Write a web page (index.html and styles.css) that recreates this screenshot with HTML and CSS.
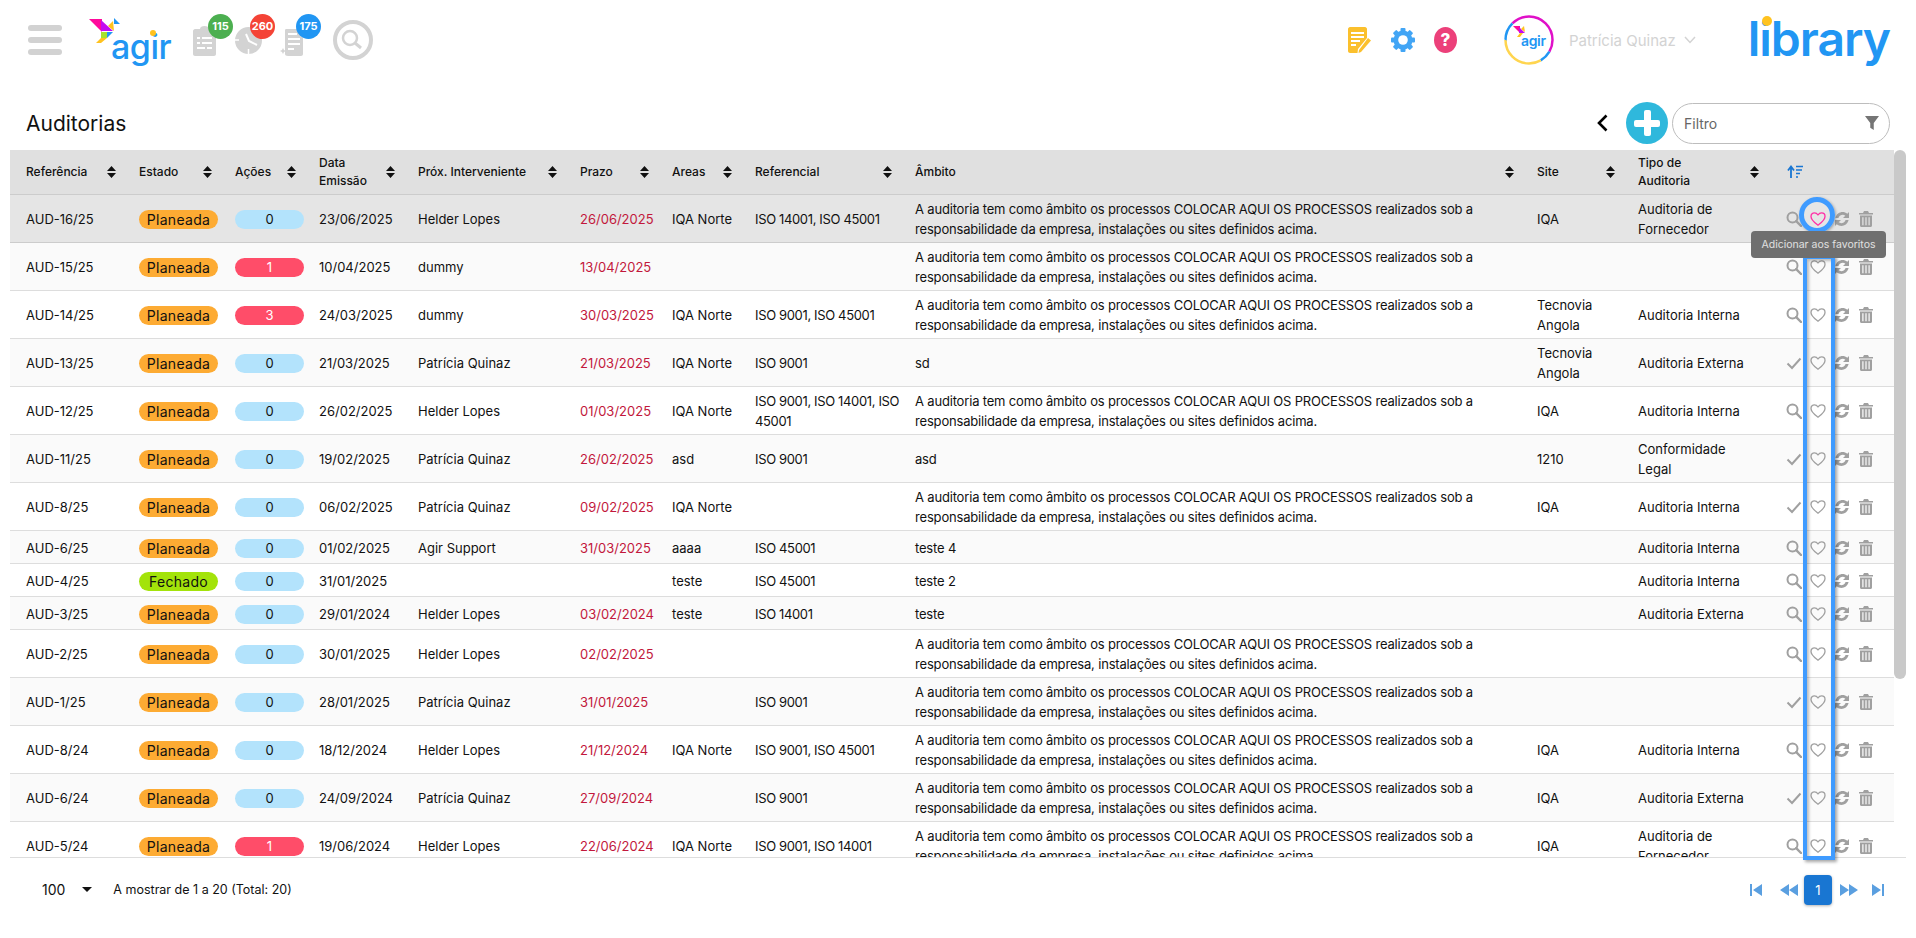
FILE: index.html
```html
<!DOCTYPE html>
<html lang="pt">
<head>
<meta charset="utf-8">
<title>Auditorias</title>
<link rel="stylesheet" href="styles.css">
</head>
<body>
<svg class="defs" width="0" height="0" aria-hidden="true">
  <symbol id="i-search" viewBox="0 0 16 16"><circle cx="6.5" cy="6.5" r="5" fill="none" stroke="currentColor" stroke-width="2"/><path d="M10.2 10.2 15 15" stroke="currentColor" stroke-width="2.4" stroke-linecap="round"/></symbol>
  <symbol id="i-check" viewBox="0 0 16 16"><path d="M1.5 8.5 6 13 14.5 3.5" fill="none" stroke="currentColor" stroke-width="2"/></symbol>
  <symbol id="i-heart" viewBox="0 0 16 16"><path d="M8 14.2C5 11.8 1 9 1 5.4 1 3.2 2.6 1.9 4.4 1.9 5.9 1.9 7.2 2.7 8 4 8.8 2.7 10.1 1.9 11.6 1.9 13.4 1.9 15 3.2 15 5.4 15 9 11 11.8 8 14.2Z" fill="none" stroke="currentColor" stroke-width="1.3" stroke-linejoin="round"/></symbol>
  <symbol id="i-refresh" viewBox="0 0 16 16"><path d="M15 1V7H9L11.3 4.700C9.300 3.200 5.800 3.600 4.400 7H1.400C2.800 1.300 9 -.6 13.300 2.700Z" fill="currentColor"/><path d="M1 15V9H7L4.700 11.300C6.700 12.800 10.200 12.400 11.600 9H14.600C13.200 14.700 7 16.600 2.700 13.300Z" fill="currentColor"/></symbol>
  <symbol id="i-trash" viewBox="0 0 14 16"><path d="M5 0H9L10 2H14V3.500H0V2H4Z" fill="currentColor"/><path d="M1 4.500H13V14.500C13 15.400 12.400 16 11.500 16H2.500C1.600 16 1 15.400 1 14.500ZM3.300 6.300V14.300H4.500V6.300ZM6.400 6.300V14.300H7.600V6.300ZM9.500 6.300V14.300H10.700V6.300Z" fill="currentColor" fill-rule="evenodd"/></symbol>
  <symbol id="i-sort" viewBox="0 0 9 12"><path d="M4.500 0 9 5H0ZM4.500 12 0 7H9Z" fill="currentColor"/></symbol>
</svg>

<header class="topbar">
  <div class="burger"><span></span><span></span><span></span></div>
  <div class="logo">
    <svg class="bird" viewBox="0 0 32 26" width="32" height="26">
      <polygon points="0,1 13,1 13,14" fill="#ff0a9c"/>
      <polygon points="12,2 24,13 12,13" fill="#c40df0"/>
      <polygon points="24,3 25,13 19,8" fill="#ffc21f"/>
      <polygon points="25,0 31,6 25,6" fill="#2196f3"/>
      <polygon points="12,14 18,14 18,20 12,20" fill="#a6e22e"/>
      <polygon points="18,14 24,14 18,20" fill="#2196f3"/>
      <polygon points="7,25 12,20 18,20 12,25" fill="#ffc21f"/>
    </svg>
    <span class="logo-text">agir</span>
    <span class="logo-dot"></span>
  </div>
  <div class="quick">
    <div class="quick-item q1">
      <svg viewBox="0 0 23 30" width="23" height="30"><path d="M2 3H7C7 1 9 0 11.500 0S16 1 16 3H21C22 3 23 4 23 5V28C23 29 22 30 21 30H2C1 30 0 29 0 28V5C0 4 1 3 2 3ZM4 11V13H7V11ZM9 11V13H19V11ZM4 16V18H7V16ZM9 16V18H19V16ZM4 21V23H12V21ZM14 21V23H19V21Z" fill="#d3d3d3" fill-rule="evenodd"/></svg>
      <span class="count green">115</span>
    </div>
    <div class="quick-item q2">
      <svg viewBox="0 0 27 27" width="27" height="27"><circle cx="13.500" cy="13.500" r="13.500" fill="#d3d3d3"/><path d="M11 7 14 14 22 18" fill="none" stroke="#fff" stroke-width="2"/><path d="M13.500 22V27M0 13H4" stroke="#fff" stroke-width="1.500"/></svg>
      <span class="count red">260</span>
    </div>
    <div class="quick-item q3">
      <svg viewBox="0 0 23 27" width="23" height="27"><path d="M6 0H20C22 0 23 1 23 3V25C23 26 22 27 21 27H8C6 27 5 26 5 25V2C5 1 5 0 6 0ZM8 4V6H17V4ZM8 9V11H20V9ZM8 14V16H20V14ZM8 19V21H14V19Z" fill="#d3d3d3" fill-rule="evenodd"/><path d="M3 19 4 21 6 22 4 23 3 25 2 23 0 22 2 21Z" fill="#d3d3d3"/></svg>
      <span class="count blue">175</span>
    </div>
  </div>
  <div class="search-ring">
    <svg viewBox="0 0 40 40" width="40" height="40"><circle cx="20" cy="20" r="18" fill="none" stroke="#d3d3d3" stroke-width="4"/><circle cx="17" cy="18" r="7" fill="none" stroke="#d3d3d3" stroke-width="2.500"/><path d="M22 23 28 28" stroke="#d3d3d3" stroke-width="3"/></svg>
  </div>
  <div class="spacer"></div>
  <svg class="tool t-note" viewBox="0 0 23 26" width="23" height="26"><path d="M2 0H17C18 0 19 1 19 2V11L10 22 9.500 26H2C1 26 0 25 0 24V2C0 1 1 0 2 0ZM3 5V7H16V5ZM3 9V11H16V9ZM3 13V15H12V13ZM3 17V19H8V17Z" fill="#fbc02d" fill-rule="evenodd"/><path d="M20 11 23 13.500 13 25 10.500 26 11 23Z" fill="#fbc02d"/></svg>
  <svg class="tool t-gear" viewBox="0 0 24 24" width="24" height="24">
    <circle cx="12" cy="12" r="9.500" fill="#42a5f5"/>
    <g fill="#42a5f5"><rect x="9.500" y="0" width="5" height="24" rx="1"/><rect x="0" y="9.500" width="24" height="5" rx="1"/><rect x="9.500" y="0" width="5" height="24" rx="1" transform="rotate(45 12 12)"/><rect x="9.500" y="0" width="5" height="24" rx="1" transform="rotate(-45 12 12)"/></g>
    <circle cx="12" cy="12" r="4.800" fill="#fff"/>
  </svg>
  <span class="tool t-help">?</span>
  <div class="avatar">
    <svg viewBox="0 0 50 50" width="50" height="50">
      <g fill="none" stroke-width="2.500" transform="rotate(-90 25 25)">
        <circle cx="25" cy="25" r="23.500" pathLength="360" stroke="#e010c8" stroke-dasharray="165 360" stroke-dashoffset="-315"/>
        <circle cx="25" cy="25" r="23.500" pathLength="360" stroke="#e010c8" stroke-dasharray="120 360"/>
        <circle cx="25" cy="25" r="23.500" pathLength="360" stroke="#2196f3" stroke-dasharray="30 360" stroke-dashoffset="-120"/>
        <circle cx="25" cy="25" r="23.500" pathLength="360" stroke="#ffd54f" stroke-dasharray="120 360" stroke-dashoffset="-150"/>
        <circle cx="25" cy="25" r="23.500" pathLength="360" stroke="#2196f3" stroke-dasharray="45 360" stroke-dashoffset="-270"/>
      </g>
      <polygon points="9,11 16,11 16,18" fill="#ff0a9c"/>
      <polygon points="15,12 21,18 15,18" fill="#c40df0"/>
      <polygon points="20,11 21,17 17,14" fill="#ffc21f"/>
      <polygon points="13,22 16,18 19,18 16,22" fill="#ffc21f"/>
    </svg>
    <span class="avatar-text">agir</span>
  </div>
  <span class="user">Patrícia Quinaz</span>
  <svg class="chev" viewBox="0 0 12 8" width="12" height="8"><path d="M1 1 6 6.500 11 1" fill="none" stroke="#d3d3d3" stroke-width="1.500"/></svg>
  <div class="brand">library<span class="brand-dot"></span></div>
</header>

<section class="titlebar">
  <h1>Auditorias</h1>
  <div class="actions">
    <svg class="back" viewBox="0 0 11 18" width="11" height="18"><path d="M9.500 1.500 2 9 9.500 16.500" fill="none" stroke="#000" stroke-width="2.600"/></svg>
    <button class="add" type="button" aria-label="Adicionar"><span class="plus-h"></span><span class="plus-v"></span></button>
    <div class="filter">
      <span>Filtro</span>
      <svg viewBox="0 0 12 12" width="14" height="14"><path d="M0 0H12L7.500 6V12L4.500 10V6Z" fill="#757575"/></svg>
    </div>
  </div>
</section>

<section class="table-area">
  <div class="table-clip">
    <table>
      <colgroup>
        <col class="c-ref"><col class="c-est"><col class="c-aco"><col class="c-dat"><col class="c-pro"><col class="c-pra"><col class="c-are"><col class="c-rfl"><col class="c-amb"><col class="c-sit"><col class="c-tip"><col class="c-act">
      </colgroup>
      <thead>
        <tr>
          <th><div class="th"><span>Referência</span><svg class="sort"><use href="#i-sort"/></svg></div></th>
          <th><div class="th"><span>Estado</span><svg class="sort"><use href="#i-sort"/></svg></div></th>
          <th><div class="th"><span>Ações</span><svg class="sort"><use href="#i-sort"/></svg></div></th>
          <th><div class="th"><span>Data<br>Emissão</span><svg class="sort"><use href="#i-sort"/></svg></div></th>
          <th><div class="th"><span>Próx. Interveniente</span><svg class="sort"><use href="#i-sort"/></svg></div></th>
          <th><div class="th"><span>Prazo</span><svg class="sort"><use href="#i-sort"/></svg></div></th>
          <th><div class="th"><span>Areas</span><svg class="sort"><use href="#i-sort"/></svg></div></th>
          <th><div class="th"><span>Referencial</span><svg class="sort"><use href="#i-sort"/></svg></div></th>
          <th><div class="th"><span>Âmbito</span><svg class="sort"><use href="#i-sort"/></svg></div></th>
          <th><div class="th"><span>Site</span><svg class="sort"><use href="#i-sort"/></svg></div></th>
          <th><div class="th"><span>Tipo de<br>Auditoria</span><svg class="sort"><use href="#i-sort"/></svg></div></th>
          <th class="th-act"><svg class="sort-list" viewBox="0 0 16 14" width="16" height="14"><path d="M4 13V3M1 5.500 4 1.500 7 5.500" fill="none" stroke="#1976d2" stroke-width="1.800"/><path d="M9 1.500H16M9 5H15M9 8.500H13M9 12H11" stroke="#1976d2" stroke-width="1.600"/></svg></th>
        </tr>
      </thead>
      <tbody>
        <tr class="hover"><td>AUD-16/25</td><td><span class="pill plan">Planeada</span></td><td><span class="num zero">0</span></td><td>23/06/2025</td><td>Helder Lopes</td><td class="due">26/06/2025</td><td>IQA Norte</td><td>ISO 14001, ISO 45001</td><td>A auditoria tem como âmbito os processos COLOCAR AQUI OS PROCESSOS realizados sob a responsabilidade da empresa, instalações ou sites definidos acima.</td><td>IQA</td><td>Auditoria de Fornecedor</td><td><div class="ops"><svg class="op"><use href="#i-search"/></svg><svg class="op heart-on"><use href="#i-heart"/></svg><svg class="op"><use href="#i-refresh"/></svg><svg class="op"><use href="#i-trash"/></svg></div></td></tr>
        <tr><td>AUD-15/25</td><td><span class="pill plan">Planeada</span></td><td><span class="num hot">1</span></td><td>10/04/2025</td><td>dummy</td><td class="due">13/04/2025</td><td></td><td></td><td>A auditoria tem como âmbito os processos COLOCAR AQUI OS PROCESSOS realizados sob a responsabilidade da empresa, instalações ou sites definidos acima.</td><td></td><td></td><td><div class="ops"><svg class="op"><use href="#i-search"/></svg><svg class="op"><use href="#i-heart"/></svg><svg class="op"><use href="#i-refresh"/></svg><svg class="op"><use href="#i-trash"/></svg></div></td></tr>
        <tr><td>AUD-14/25</td><td><span class="pill plan">Planeada</span></td><td><span class="num hot">3</span></td><td>24/03/2025</td><td>dummy</td><td class="due">30/03/2025</td><td>IQA Norte</td><td>ISO 9001, ISO 45001</td><td>A auditoria tem como âmbito os processos COLOCAR AQUI OS PROCESSOS realizados sob a responsabilidade da empresa, instalações ou sites definidos acima.</td><td>Tecnovia Angola</td><td>Auditoria Interna</td><td><div class="ops"><svg class="op"><use href="#i-search"/></svg><svg class="op"><use href="#i-heart"/></svg><svg class="op"><use href="#i-refresh"/></svg><svg class="op"><use href="#i-trash"/></svg></div></td></tr>
        <tr><td>AUD-13/25</td><td><span class="pill plan">Planeada</span></td><td><span class="num zero">0</span></td><td>21/03/2025</td><td>Patrícia Quinaz</td><td class="due">21/03/2025</td><td>IQA Norte</td><td>ISO 9001</td><td>sd</td><td>Tecnovia Angola</td><td>Auditoria Externa</td><td><div class="ops"><svg class="op"><use href="#i-check"/></svg><svg class="op"><use href="#i-heart"/></svg><svg class="op"><use href="#i-refresh"/></svg><svg class="op"><use href="#i-trash"/></svg></div></td></tr>
        <tr><td>AUD-12/25</td><td><span class="pill plan">Planeada</span></td><td><span class="num zero">0</span></td><td>26/02/2025</td><td>Helder Lopes</td><td class="due">01/03/2025</td><td>IQA Norte</td><td>ISO 9001, ISO 14001, ISO<br>45001</td><td>A auditoria tem como âmbito os processos COLOCAR AQUI OS PROCESSOS realizados sob a responsabilidade da empresa, instalações ou sites definidos acima.</td><td>IQA</td><td>Auditoria Interna</td><td><div class="ops"><svg class="op"><use href="#i-search"/></svg><svg class="op"><use href="#i-heart"/></svg><svg class="op"><use href="#i-refresh"/></svg><svg class="op"><use href="#i-trash"/></svg></div></td></tr>
        <tr><td>AUD-11/25</td><td><span class="pill plan">Planeada</span></td><td><span class="num zero">0</span></td><td>19/02/2025</td><td>Patrícia Quinaz</td><td class="due">26/02/2025</td><td>asd</td><td>ISO 9001</td><td>asd</td><td>1210</td><td>Conformidade Legal</td><td><div class="ops"><svg class="op"><use href="#i-check"/></svg><svg class="op"><use href="#i-heart"/></svg><svg class="op"><use href="#i-refresh"/></svg><svg class="op"><use href="#i-trash"/></svg></div></td></tr>
        <tr><td>AUD-8/25</td><td><span class="pill plan">Planeada</span></td><td><span class="num zero">0</span></td><td>06/02/2025</td><td>Patrícia Quinaz</td><td class="due">09/02/2025</td><td>IQA Norte</td><td></td><td>A auditoria tem como âmbito os processos COLOCAR AQUI OS PROCESSOS realizados sob a responsabilidade da empresa, instalações ou sites definidos acima.</td><td>IQA</td><td>Auditoria Interna</td><td><div class="ops"><svg class="op"><use href="#i-check"/></svg><svg class="op"><use href="#i-heart"/></svg><svg class="op"><use href="#i-refresh"/></svg><svg class="op"><use href="#i-trash"/></svg></div></td></tr>
        <tr><td>AUD-6/25</td><td><span class="pill plan">Planeada</span></td><td><span class="num zero">0</span></td><td>01/02/2025</td><td>Agir Support</td><td class="due">31/03/2025</td><td>aaaa</td><td>ISO 45001</td><td>teste 4</td><td></td><td>Auditoria Interna</td><td><div class="ops"><svg class="op"><use href="#i-search"/></svg><svg class="op"><use href="#i-heart"/></svg><svg class="op"><use href="#i-refresh"/></svg><svg class="op"><use href="#i-trash"/></svg></div></td></tr>
        <tr><td>AUD-4/25</td><td><span class="pill done">Fechado</span></td><td><span class="num zero">0</span></td><td>31/01/2025</td><td></td><td class="due"></td><td>teste</td><td>ISO 45001</td><td>teste 2</td><td></td><td>Auditoria Interna</td><td><div class="ops"><svg class="op"><use href="#i-search"/></svg><svg class="op"><use href="#i-heart"/></svg><svg class="op"><use href="#i-refresh"/></svg><svg class="op"><use href="#i-trash"/></svg></div></td></tr>
        <tr><td>AUD-3/25</td><td><span class="pill plan">Planeada</span></td><td><span class="num zero">0</span></td><td>29/01/2024</td><td>Helder Lopes</td><td class="due">03/02/2024</td><td>teste</td><td>ISO 14001</td><td>teste</td><td></td><td>Auditoria Externa</td><td><div class="ops"><svg class="op"><use href="#i-search"/></svg><svg class="op"><use href="#i-heart"/></svg><svg class="op"><use href="#i-refresh"/></svg><svg class="op"><use href="#i-trash"/></svg></div></td></tr>
        <tr><td>AUD-2/25</td><td><span class="pill plan">Planeada</span></td><td><span class="num zero">0</span></td><td>30/01/2025</td><td>Helder Lopes</td><td class="due">02/02/2025</td><td></td><td></td><td>A auditoria tem como âmbito os processos COLOCAR AQUI OS PROCESSOS realizados sob a responsabilidade da empresa, instalações ou sites definidos acima.</td><td></td><td></td><td><div class="ops"><svg class="op"><use href="#i-search"/></svg><svg class="op"><use href="#i-heart"/></svg><svg class="op"><use href="#i-refresh"/></svg><svg class="op"><use href="#i-trash"/></svg></div></td></tr>
        <tr><td>AUD-1/25</td><td><span class="pill plan">Planeada</span></td><td><span class="num zero">0</span></td><td>28/01/2025</td><td>Patrícia Quinaz</td><td class="due">31/01/2025</td><td></td><td>ISO 9001</td><td>A auditoria tem como âmbito os processos COLOCAR AQUI OS PROCESSOS realizados sob a responsabilidade da empresa, instalações ou sites definidos acima.</td><td></td><td></td><td><div class="ops"><svg class="op"><use href="#i-check"/></svg><svg class="op"><use href="#i-heart"/></svg><svg class="op"><use href="#i-refresh"/></svg><svg class="op"><use href="#i-trash"/></svg></div></td></tr>
        <tr><td>AUD-8/24</td><td><span class="pill plan">Planeada</span></td><td><span class="num zero">0</span></td><td>18/12/2024</td><td>Helder Lopes</td><td class="due">21/12/2024</td><td>IQA Norte</td><td>ISO 9001, ISO 45001</td><td>A auditoria tem como âmbito os processos COLOCAR AQUI OS PROCESSOS realizados sob a responsabilidade da empresa, instalações ou sites definidos acima.</td><td>IQA</td><td>Auditoria Interna</td><td><div class="ops"><svg class="op"><use href="#i-search"/></svg><svg class="op"><use href="#i-heart"/></svg><svg class="op"><use href="#i-refresh"/></svg><svg class="op"><use href="#i-trash"/></svg></div></td></tr>
        <tr><td>AUD-6/24</td><td><span class="pill plan">Planeada</span></td><td><span class="num zero">0</span></td><td>24/09/2024</td><td>Patrícia Quinaz</td><td class="due">27/09/2024</td><td></td><td>ISO 9001</td><td>A auditoria tem como âmbito os processos COLOCAR AQUI OS PROCESSOS realizados sob a responsabilidade da empresa, instalações ou sites definidos acima.</td><td>IQA</td><td>Auditoria Externa</td><td><div class="ops"><svg class="op"><use href="#i-check"/></svg><svg class="op"><use href="#i-heart"/></svg><svg class="op"><use href="#i-refresh"/></svg><svg class="op"><use href="#i-trash"/></svg></div></td></tr>
        <tr><td>AUD-5/24</td><td><span class="pill plan">Planeada</span></td><td><span class="num hot">1</span></td><td>19/06/2024</td><td>Helder Lopes</td><td class="due">22/06/2024</td><td>IQA Norte</td><td>ISO 9001, ISO 14001</td><td>A auditoria tem como âmbito os processos COLOCAR AQUI OS PROCESSOS realizados sob a responsabilidade da empresa, instalações ou sites definidos acima.</td><td>IQA</td><td>Auditoria de Fornecedor</td><td><div class="ops"><svg class="op"><use href="#i-search"/></svg><svg class="op"><use href="#i-heart"/></svg><svg class="op"><use href="#i-refresh"/></svg><svg class="op"><use href="#i-trash"/></svg></div></td></tr>
      </tbody>
    </table>
  </div>
  <div class="scrollbar"></div>
</section>

<footer class="pagebar">
  <span class="size">100</span>
  <span class="size-caret"></span>
  <span class="info">A mostrar de 1 a 20 (Total: 20)</span>
  <div class="spacer"></div>
  <svg class="pg pg-first" viewBox="0 0 12 12" width="12" height="12"><path d="M0 0H2V12H0ZM12 0V12L3 6Z" fill="#5a9fe0"/></svg>
  <svg class="pg pg-prev" viewBox="0 0 18 12" width="18" height="12"><path d="M9 0V12L0 6ZM18 0V12L9 6Z" fill="#5a9fe0"/></svg>
  <span class="pg-current">1</span>
  <svg class="pg pg-next" viewBox="0 0 18 12" width="18" height="12"><path d="M0 0V12L9 6ZM9 0V12L18 6Z" fill="#5a9fe0"/></svg>
  <svg class="pg pg-last" viewBox="0 0 12 12" width="12" height="12"><path d="M0 0V12L9 6ZM10 0H12V12H10Z" fill="#5a9fe0"/></svg>
</footer>

<div class="mark-circle"></div>
<div class="mark-rect"></div>
<div class="tip">Adicionar aos favoritos</div>
</body>
</html>
```

FILE: styles.css
```css
* { box-sizing: border-box; }
html, body { margin: 0; height: 100%; }
body {
  position: relative;
  width: 1916px;
  height: 938px;
  overflow: hidden;
  background: #fff;
  color: #111;
  font-family: Inter, "Liberation Sans", sans-serif;
  font-size: 13px;
}
.defs { position: absolute; }
.spacer { flex: 1; }

/* top bar */
.topbar { display: flex; align-items: center; height: 80px; padding: 0 26px 0 28px; }
.burger { display: flex; flex-direction: column; gap: 6px; width: 34px; }
.burger span { height: 6px; border-radius: 3px; background: #d2d2d2; }
.logo { position: relative; width: 82px; height: 44px; margin-left: 27px; }
.bird { position: absolute; left: 0; top: 0; }
.logo-text { position: absolute; left: 22px; top: 12px; font-size: 34px; line-height: 34px; font-weight: 500; color: #2196f3; letter-spacing: -.5px; }
.logo-dot { position: absolute; left: 61px; top: 12px; width: 6px; height: 6px; border-radius: 50%; background: #ffc21f; }
.quick { display: flex; flex: none; width: 140px; height: 42px; margin: 0 0 10px 22px; }
.quick-item { position: relative; }
.quick-item svg { position: absolute; left: 0; bottom: 0; }
.q1 { width: 42px; }
.q2 { width: 45px; }
.q3 { width: 45px; }
.q2 svg { bottom: 2px; }
.count {
  position: absolute;
  top: 0;
  width: 25px;
  height: 25px;
  border-radius: 50%;
  color: #fff;
  font-size: 11px;
  font-weight: 700;
  line-height: 25px;
  text-align: center;
}
.green { left: 15px; background: #4caf50; }
.red { left: 15px; background: #f44336; }
.blue { left: 16px; background: #2196f3; }
.search-ring { display: flex; }
.tool { flex: none; }
.t-note { margin-right: 20px; }
.t-gear { margin-right: 19px; }
.t-help {
  width: 23px;
  height: 26px;
  border-radius: 50%;
  background: #ec407a;
  color: #fff;
  font-size: 17px;
  font-weight: 800;
  line-height: 26px;
  text-align: center;
}
.avatar { position: relative; width: 50px; height: 50px; margin-left: 47px; flex: none; }
.avatar svg { display: block; }
.avatar-text { position: absolute; left: 17px; top: 18px; font-size: 14px; line-height: 16px; font-weight: 600; color: #2196f3; letter-spacing: -.3px; }
.user { margin-left: 15px; color: #d3d3d3; font-size: 15px; }
.chev { margin-left: 8px; flex: none; }
.brand {
  position: relative;
  flex: none;
  margin: -2px 0 0 52px;
  font-size: 48px;
  line-height: 50px;
  font-weight: 600;
  color: #2196f3;
  letter-spacing: -1px;
}
.brand-dot { position: absolute; left: 14px; top: 2px; width: 10px; height: 10px; border-radius: 50%; background: #ffc21f; }

/* title row */
.titlebar { display: flex; align-items: center; justify-content: space-between; height: 70px; padding: 16px 26px 0 26px; }
h1 { margin: 0; font-size: 21px; font-weight: 400; color: #111; }
.actions { display: flex; align-items: center; }
.back { margin-right: 18px; }
.add { position: relative; width: 42px; height: 42px; margin-right: 4px; padding: 0; border: 0; border-radius: 50%; background: #2fb8dc; }
.plus-h, .plus-v { position: absolute; background: #fff; border-radius: 2px; }
.plus-h { left: 8px; top: 17.5px; width: 26px; height: 7px; }
.plus-v { left: 17.5px; top: 8px; width: 7px; height: 26px; }
.filter {
  display: flex;
  align-items: center;
  justify-content: space-between;
  width: 218px;
  height: 41px;
  padding: 0 10px 0 11px;
  border: 1px solid #bdbdbd;
  border-radius: 21px;
  color: #666;
  font-size: 14px;
}

/* table */
.table-area { display: flex; align-items: flex-start; height: 707px; padding-left: 10px; }
.table-clip { width: 1884px; height: 707px; overflow: hidden; }
table { width: 1884px; table-layout: fixed; border-collapse: separate; border-spacing: 0; }
.c-ref { width: 113px; } .c-est { width: 96px; } .c-aco { width: 84px; } .c-dat { width: 99px; }
.c-pro { width: 162px; } .c-pra { width: 92px; } .c-are { width: 83px; } .c-rfl { width: 160px; }
.c-amb { width: 622px; } .c-sit { width: 101px; } .c-tip { width: 144px; } .c-act { width: 128px; }
th {
  height: 45px;
  padding: 0 7px 0 16px;
  background: #e0e0e0;
  border-bottom: 1px solid #ccc;
  font-size: 12px;
  font-weight: 500;
  line-height: 18px;
  text-align: left;
}
.th { display: flex; align-items: center; justify-content: space-between; }
.sort { flex: none; width: 9px; height: 12px; color: #111; }
.th-act { padding-left: 21px; }
.sort-list { display: block; }
td {
  height: 33px;
  padding: 4px 0 3px 16px;
  border-bottom: 1px solid #ddd;
  font-size: 13px;
  line-height: 20px;
  vertical-align: middle;
}
td:nth-child(8) { letter-spacing: -.35px; white-space: nowrap; }
td:nth-child(9) { letter-spacing: -.175px; }
td:nth-child(11) { padding-right: 16px; }
tbody tr:nth-child(even) td { background: #fafafa; }
tbody tr.hover td { background: #e5e5e5; border-bottom-color: #ccc; }
.due { color: #c2183c; }
.pill, .num {
  display: inline-block;
  height: 19px;
  border-radius: 10px;
  font-size: 13px;
  line-height: 19px;
  text-align: center;
  vertical-align: middle;
}
.pill { width: 79px; font-size: 14px; letter-spacing: .3px; }
.plan { background: #fdab33; }
.done { background: #a3e30a; }
.num { width: 69px; }
.zero { background: #b3e3fc; }
.hot { background: #ff4d69; color: #fff; }
.ops { display: flex; align-items: center; gap: 8px; padding-left: 4px; color: #a0a0a0; }
.op { flex: none; width: 16px; height: 16px; }
.heart-on { color: #ff2ea6; }

.scrollbar { width: 12px; height: 529px; border-radius: 6px; background: #c9c9c9; }

/* pagination */
.pagebar { display: flex; align-items: center; height: 81px; margin-left: 10px; width: 1896px; padding: 0 22px 17px 32px; border-top: 1px solid #ddd; }
.size { font-size: 14px; }
.size-caret { width: 0; height: 0; margin-left: 17px; border: 5px solid transparent; border-top: 5px solid #111; border-bottom: 0; }
.info { margin-left: 21px; font-size: 12.5px; }
.pg { flex: none; }
.pg-prev { margin-left: 18px; }
.pg-current {
  width: 28px;
  height: 30px;
  margin: 0 8px 0 6px;
  border-radius: 4px;
  background: #1976d2;
  box-shadow: 0 1px 3px rgba(0, 0, 0, .3);
  color: #fff;
  font-size: 13px;
  line-height: 30px;
  text-align: center;
}
.pg-last { margin-left: 14px; }

/* annotations over the page */
.mark-circle {
  position: absolute;
  left: 1799px;
  top: 197px;
  width: 36px;
  height: 36px;
  border: 5px solid #3f9bff;
  border-radius: 50%;
  box-shadow: 1px 1px 3px rgba(0, 0, 0, .3);
}
.mark-rect {
  position: absolute;
  left: 1803px;
  top: 255px;
  width: 32px;
  height: 605px;
  border: 4px solid #3f9bff;
  box-shadow: 2px 2px 3px rgba(0, 0, 0, .35), inset 2px 2px 3px rgba(0, 0, 0, .25);
}
.tip {
  position: absolute;
  left: 1751px;
  top: 231px;
  width: 135px;
  height: 27px;
  border-radius: 4px;
  background: #6f6f6f;
  color: #e0e0e0;
  font-size: 10.5px;
  line-height: 27px;
  text-align: center;
}
```
